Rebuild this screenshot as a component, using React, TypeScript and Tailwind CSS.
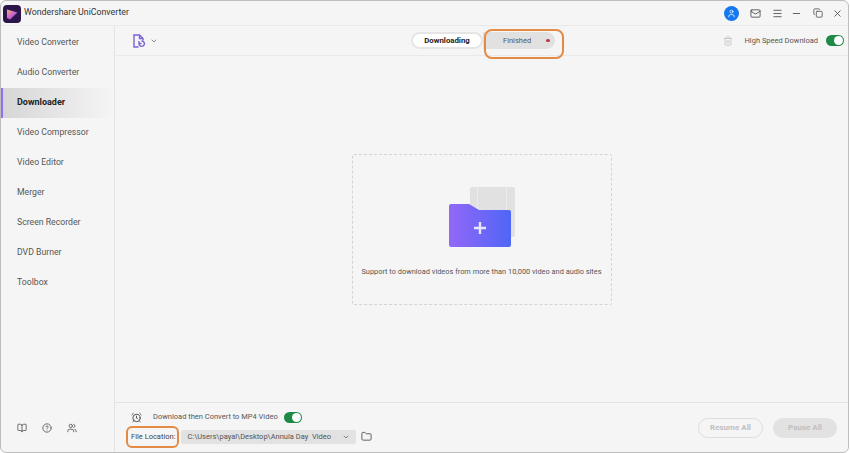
import { BookOpen, ChevronDown, CircleHelp, Folder, Mail, Menu, Minus, Trash2, User, Users, X, AlarmClock, Copy } from "lucide-react";

const navItems = ["Video Converter", "Audio Converter", "Downloader", "Video Compressor", "Video Editor", "Merger", "Screen Recorder", "DVD Burner", "Toolbox"];

function Toggle() {
  return (
    <span className="flex h-[11px] w-[18px] items-center justify-end rounded-full bg-[#1f8a48] pr-[1px]">
      <span className="h-[9px] w-[9px] rounded-full bg-white" />
    </span>
  );
}

function AppLogo() {
  return (
    <svg width="18" height="18" viewBox="0 0 18 18" className="mt-[1px]">
      <defs>
        <linearGradient id="logoPlay" x1="0" y1="0" x2="1" y2="1">
          <stop offset="0" stopColor="#f5b26b" />
          <stop offset="0.55" stopColor="#c85fd0" />
          <stop offset="1" stopColor="#7a4cf0" />
        </linearGradient>
      </defs>
      <rect width="18" height="18" rx="4" fill="#2a1648" />
      <path d="M4 4.5 L14.5 7.5 L7 14.5 L4 13 Z" fill="url(#logoPlay)" />
    </svg>
  );
}

function AddFileIcon() {
  return (
    <svg width="12" height="14" viewBox="0 0 12 14" fill="none" stroke="#7b63d6" strokeWidth="1.4">
      <path d="M5.5 13 H1 V1 H6.5 L10 4.5 V6.5" />
      <path d="M6.5 1 V4.5 H10" />
      <path d="M6 9.5 A2.7 2.7 0 1 0 8.5 7 M6 7 V9.5 H8.5" />
    </svg>
  );
}

function FolderArt() {
  return (
    <svg width="68" height="62" viewBox="0 0 68 62" className="ml-[2px]">
      <defs>
        <linearGradient id="folderFill" x1="0" y1="0" x2="1" y2="0">
          <stop offset="0" stopColor="#9367f7" />
          <stop offset="1" stopColor="#4f66f6" />
        </linearGradient>
      </defs>
      <rect x="21" y="0" width="45" height="50" rx="2" fill="#e1e1e1" />
      <rect x="28" y="0" width="1" height="50" fill="#ececec" />
      <rect x="57" y="0" width="1" height="50" fill="#ececec" />
      <path d="M2 17 Q0 17 0 19 V58 Q0 60 2 60 H60 Q62 60 62 58 V25 Q62 23 60 23 H30 L20 17 Z" fill="url(#folderFill)" />
      <path d="M31 35 V47 M25 41 H37" stroke="#e8e6fb" strokeWidth="2.4" />
    </svg>
  );
}

export default function App() {
  return (
    <div className="h-[453px] w-[850px] overflow-hidden whitespace-nowrap bg-white font-['Roboto','Liberation_Sans',sans-serif] text-[8.7px] text-[#555]">
      <div className="flex h-[453px] w-[849px] flex-col rounded-[6px] border border-[#bdbdbd] bg-[#f5f5f6]">
        <header className="flex h-[25px] shrink-0 items-center border-b border-[#e9e9e9] pl-[2px] pr-[5px]">
          <AppLogo />
          <span className="ml-[3px] text-[8.8px] text-[#333]">Wondershare UniConverter</span>
          <div className="ml-auto flex items-center text-[#555]">
            <span className="flex h-[15px] w-[15px] items-center justify-center rounded-full bg-[#1478f0]">
              <User size={9} color="#fff" />
            </span>
            <Mail size={11} className="ml-[11px]" />
            <Menu size={11} className="ml-[11px]" />
            <Minus size={11} className="ml-[8px]" />
            <Copy size={10} className="ml-[11px]" />
            <X size={11} className="ml-[9px]" />
          </div>
        </header>

        <div className="flex min-h-0 flex-1">
          <aside className="flex w-[114px] shrink-0 flex-col border-r border-[#e3e3e3] pt-[2px]">
            {navItems.map((item) => (
              <div
                key={item}
                className={
                  item === "Downloader"
                    ? "flex h-[29.9px] items-center border-l-[2px] border-[#9070ee] bg-gradient-to-r from-[#d6d6d6] to-[#f5f5f6] pl-[14px] text-[9px] font-bold text-[#222]"
                    : "flex h-[29.9px] items-center pl-[16px]"
                }
              >
                {item}
              </div>
            ))}
            <div className="mt-auto mb-[19px] flex items-center gap-[15px] pl-[16px]">
              <BookOpen size={10} />
              <CircleHelp size={10} />
              <Users size={10} />
            </div>
          </aside>

          <main className="flex min-w-0 flex-1 flex-col">
            <div className="relative flex h-[30px] shrink-0 items-center border-b border-[#e9e9e9] pl-[18px] pr-[4px] text-[7.5px]">
              <AddFileIcon />
              <ChevronDown size={8} className="ml-[5px]" />
              <div className="ml-[253px] flex items-center">
                <span className="flex h-[17px] w-[72px] items-center justify-center rounded-full border-2 border-[#e5e5e5] bg-white text-[7.8px] font-bold text-[#222]">Downloading</span>
                <span className="flex h-[17px] w-[72px] items-center rounded-r-full bg-[#e1e1e1] pl-[20px]">
                  Finished
                  <span className="ml-[15px] h-[3.5px] w-[3.5px] rounded-full bg-[#c0354a]" />
                </span>
              </div>
              <div className="ml-auto flex items-center">
                <Trash2 size={10} color="#c4c4c4" />
                <span className="ml-[12px] mr-[8px]">High Speed Download</span>
                <Toggle />
              </div>
              <span className="absolute top-[3px] left-[369px] h-[30px] w-[80px] rounded-[8px] border-2 border-[#e38a45]" />
            </div>

            <div className="flex flex-1 items-center justify-center">
              <div className="flex h-[151px] w-[260px] flex-col items-center rounded-[2px] border border-dashed border-[#d4d4d4] pt-[32px]">
                <FolderArt />
                <p className="mt-[17px] text-[7.4px] text-[#555]">Support to download videos from more than 10,000 video and audio sites</p>
              </div>
            </div>

            <footer className="flex h-[50px] shrink-0 items-center border-t border-[#e3e3e3] pl-[16px] pr-[11px] text-[7.5px]">
              <div className="flex flex-col gap-[7px]">
                <div className="flex items-center">
                  <AlarmClock size={11} className="text-[#444]" />
                  <span className="ml-[11px] mr-[6px]">Download then Convert to MP4 Video</span>
                  <Toggle />
                </div>
                <div className="relative flex items-center">
                  <span className="text-[#444]">File Location:</span>
                  <span className="ml-[6px] flex h-[14px] w-[175px] items-center justify-between rounded-[2px] bg-[#e2e2e2] px-[6px]">
                    C:\Users\payal\Desktop\Annula Day&nbsp; Video
                    <ChevronDown size={8} />
                  </span>
                  <Folder size={11} className="ml-[5px]" />
                  <span className="absolute top-[-4px] left-[-5px] h-[22px] w-[53px] rounded-[6px] border-2 border-[#e38a45]" />
                </div>
              </div>
              <div className="ml-auto flex items-center gap-[10px] text-[8px] font-bold text-[#c0c0c0]">
                <span className="flex h-[20px] w-[65px] items-center justify-center rounded-full border border-[#dedede]">Resume All</span>
                <span className="flex h-[20px] w-[64px] items-center justify-center rounded-full bg-[#e2e2e2]">Pause All</span>
              </div>
            </footer>
          </main>
        </div>
      </div>
    </div>
  );
}
